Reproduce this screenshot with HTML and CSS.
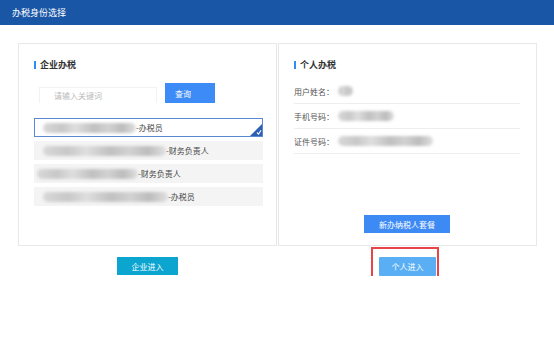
FILE: index.html
```html
<!DOCTYPE html>
<html lang="zh-CN">
    <head>
        <meta charset="UTF-8" />
        <meta name="viewport" content="width=device-width, initial-scale=1.0" />
        <title>办税身份选择</title>
        <link rel="stylesheet" href="styles.css">
    </head>
    <body>
        <div class="header">办税身份选择</div>

        <div class="main">
            <div class="panels">
                <!-- left: company -->
                <div class="panel">
                    <div class="panel-title">企业办税</div>
                    <div class="search-row">
                        <input class="search-input" type="text" placeholder="请输入关键词" />
                        <button class="btn btn-search">查询</button>
                    </div>
                    <div class="company-list">
                        <div class="company-item selected">
                            <span class="blur" style="width: 93px"></span><span>-办税员</span>
                            <svg class="corner" width="12" height="12" viewBox="0 0 12 12">
                                <polygon points="12,0 12,12 0,12" fill="#2b5fb3" />
                                <path d="M7 8.5 L8.6 10.2 L11 6.2" fill="none" stroke="#fff" stroke-width="1.1" />
                            </svg>
                        </div>
                        <div class="company-item">
                            <span class="blur" style="width: 123px"></span><span>-财务负责人</span>
                        </div>
                        <div class="company-item short">
                            <span class="blur" style="width: 101px"></span><span>-财务负责人</span>
                        </div>
                        <div class="company-item">
                            <span class="blur" style="width: 125px"></span><span>-办税员</span>
                        </div>
                    </div>
                </div>

                <!-- right: personal -->
                <div class="panel panel-right">
                    <div class="panel-title">个人办税</div>
                    <div class="info-rows">
                        <div class="info-row">
                            <span class="label">用户姓名：</span><span class="blur" style="width: 15px"></span>
                        </div>
                        <div class="info-row">
                            <span class="label">手机号码：</span><span class="blur" style="width: 56px"></span>
                        </div>
                        <div class="info-row">
                            <span class="label">证件号码：</span><span class="blur" style="width: 95px"></span>
                        </div>
                    </div>
                    <button class="btn btn-new">新办纳税人套餐</button>
                </div>
            </div>

            <div class="actions">
                <div class="action-cell">
                    <button class="btn btn-company">企业进入</button>
                </div>
                <div class="action-cell">
                    <div class="mark-wrap">
                        <button class="btn btn-person">个人进入</button>
                        <div class="mark"></div>
                    </div>
                </div>
            </div>
        </div>
    </body>
</html>
```

FILE: styles.css
```css
body {
    margin: 0;
    padding: 0;
    font-family: "Noto Sans CJK SC", "Noto Sans", sans-serif;
    font-size: 8px;
    color: #333;
    background: #fff;
}
.header {
    height: 25px;
    line-height: 25px;
    padding-left: 12px;
    background-color: #1a56a6;
    color: #fff;
    font-size: 9px;
}
.main {
    padding: 18px 0 0 18px;
}
.panels {
    display: flex;
    gap: 1px;
}
.panel {
    box-sizing: border-box;
    width: 259px;
    height: 203px;
    border: 1px solid #e8e8e8;
    padding: 14px 0 0 15px;
    display: flex;
    flex-direction: column;
}
.panel-title {
    display: flex;
    align-items: center;
    height: 13px;
    font-size: 9px;
    font-weight: bold;
    color: #333;
}
.panel-title::before {
    content: "";
    width: 2px;
    height: 8px;
    margin-right: 4px;
    background-color: #2f8cf0;
}
.search-row {
    display: flex;
    align-items: flex-end;
    gap: 8px;
    margin: 12px 0 0 5px;
}
.search-input {
    box-sizing: border-box;
    width: 118px;
    height: 16px;
    border: 1px solid #f2f2f2;
    border-bottom: none;
    padding: 0 0 0 14px;
    font-family: inherit;
    font-size: 8px;
    outline: none;
}
.search-input::placeholder {
    color: #bbb;
}
.btn {
    border: none;
    padding: 0;
    color: #fff;
    font-family: inherit;
    font-size: 8px;
    cursor: pointer;
}
.btn-search {
    width: 50px;
    height: 20px;
    background-color: #3d8bf6;
    text-align: left;
    padding-left: 10px;
}
.company-list {
    display: flex;
    flex-direction: column;
    gap: 4px;
    width: 229px;
    margin-top: 15px;
}
.company-item {
    position: relative;
    box-sizing: border-box;
    height: 19px;
    display: flex;
    align-items: center;
    padding-left: 9px;
    background-color: #f4f4f4;
    color: #444;
}
.company-item.short {
    padding-left: 3px;
}
.company-item.selected {
    background-color: #fff;
    border: 1px solid #5b88d2;
    padding-left: 8px;
}
.corner {
    position: absolute;
    right: 0;
    bottom: 0;
}
.blur {
    display: inline-block;
    height: 10px;
    border-radius: 5px;
    background: linear-gradient(90deg, #d8d8d8 0%, #c8c8c8 20%, #dedede 35%, #c0c0c0 55%, #d2d2d2 70%, #bcbcbc 85%, #e0e0e0 100%);
    filter: blur(1.5px);
}
.panel-right {
    padding-right: 16px;
}
.info-rows {
    margin-top: 8px;
}
.info-row {
    height: 24px;
    display: flex;
    align-items: center;
    border-bottom: 1px solid #eeeeee;
    color: #555;
}
.label {
    margin-right: 4px;
}
.btn-new {
    align-self: center;
    width: 86px;
    height: 18px;
    margin: auto 0 12px 0;
    background-color: #3d8af5;
}
.actions {
    display: flex;
    gap: 1px;
    margin-top: 11px;
}
.action-cell {
    width: 259px;
    display: flex;
    justify-content: center;
}
.btn-company {
    width: 61px;
    height: 18px;
    background-color: #0ba5d0;
}
.mark-wrap {
    position: relative;
}
.btn-person {
    width: 57px;
    height: 19px;
    background-color: #5aaff4;
    border-radius: 1px;
}
.mark {
    position: absolute;
    top: -10px;
    left: -8px;
    width: 64px;
    height: 32px;
    border: 2px solid #e8454a;
}
```
